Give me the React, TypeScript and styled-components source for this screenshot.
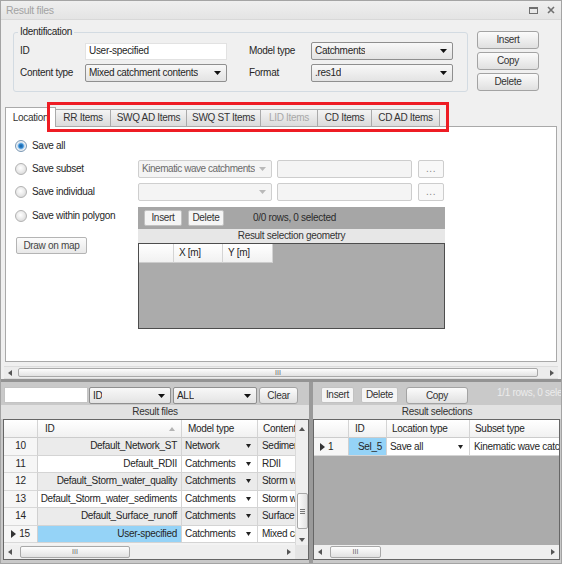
import React from "react";
import styled, { createGlobalStyle, css } from "styled-components";

const GlobalStyle = createGlobalStyle`
  html, body { margin: 0; padding: 0; background: #ffffff; }
  body {
    font-family: "Liberation Sans", Arial, sans-serif;
    font-size: 10px;
    color: #262626;
  }
  *, *::before, *::after { box-sizing: border-box; }
`;

/* ---------- window frame ---------- */

const Window = styled.div`
  width: 562px;
  height: 564px;
  border: 1px solid #a4a4a4;
  background: #f0f0f0;
  display: flex;
  flex-direction: column;
  overflow: hidden;
  letter-spacing: -0.3px;
  line-height: 12px;
`;

const TitleBar = styled.div`
  height: 19px;
  flex: none;
  display: flex;
  align-items: center;
  justify-content: space-between;
  padding: 0 6px 0 5px;
  background: linear-gradient(#efefef, #e4e4e4);
  border-bottom: 1px solid #d8d8d8;
  color: #a3a3a3;
  font-size: 10.5px;
`;

const TitleButtons = styled.div`
  display: flex;
  align-items: center;
  gap: 9px;
`;

/* ---------- identification header ---------- */

const HeaderRow = styled.div`
  flex: none;
  display: flex;
  align-items: flex-start;
  padding: 6px 0 0 12px;
`;

const GroupBox = styled.fieldset`
  margin: 0;
  min-width: 0;
  width: 455px;
  padding: 4px 14px 9px 6px;
  border: 1px solid #d3dbe2;
  border-radius: 3px;
`;

const GroupTitle = styled.legend`
  padding: 0 2px;
  margin-left: -2px;
  line-height: 12px;
`;

const FieldGrid = styled.div`
  display: grid;
  grid-template-columns: 65px 142px 22px 62px 142px;
  grid-template-rows: 18px 18px;
  row-gap: 4px;
  align-items: center;
`;

const FieldLabel = styled.span<{ $col: number }>`
  grid-column: ${(p) => p.$col};
  white-space: nowrap;
`;

const TextBox = styled.div`
  grid-column: 2;
  height: 17px;
  display: flex;
  align-items: center;
  padding: 0 3px;
  background: #ffffff;
  border: 1px solid #e2e2e2;
  white-space: nowrap;
  overflow: hidden;
`;

const Combo = styled.div<{ $disabled?: boolean; $w?: number; $h?: number; $col?: number }>`
  ${(p) => (p.$col ? `grid-column: ${p.$col};` : "")}
  width: ${(p) => (p.$w ? `${p.$w}px` : "auto")};
  height: ${(p) => p.$h ?? 18}px;
  flex: none;
  display: flex;
  align-items: center;
  justify-content: space-between;
  gap: 2px;
  padding: 0 5px 0 3px;
  border: 1px solid ${(p) => (p.$disabled ? "#cfcfcf" : "#8f8f8f")};
  border-radius: 2px;
  background: ${(p) => (p.$disabled ? "#f4f4f4" : "linear-gradient(#f8f8f8, #e3e3e3)")};
  color: ${(p) => (p.$disabled ? "#6b6b6b" : "#262626")};
  white-space: nowrap;
  overflow: hidden;
`;

const ComboText = styled.span<{ $tight?: boolean }>`
  overflow: hidden;
  white-space: nowrap;
  ${(p) => (p.$tight ? "letter-spacing: -0.45px;" : "")}
`;

const ButtonColumn = styled.div`
  display: flex;
  flex-direction: column;
  gap: 3px;
  margin: 5px 0 0 9px;
`;

const PushButton = styled.div<{ $w?: number; $h?: number; $ml?: number }>`
  width: ${(p) => p.$w ?? 62}px;
  height: ${(p) => p.$h ?? 18}px;
  margin-left: ${(p) => p.$ml ?? 0}px;
  flex: none;
  display: flex;
  align-items: center;
  justify-content: center;
  border: 1px solid #a3a3a3;
  border-radius: 3px;
  background: linear-gradient(#fbfbfb, #e0e0e0);
  color: #333333;
  white-space: nowrap;
`;

/* ---------- tabs ---------- */

const TabStrip = styled.div`
  position: relative;
  flex: none;
  display: flex;
  align-items: flex-end;
  height: 19px;
  margin: 15px 4px 0;
`;

const Tab = styled.div<{ $w: number; $active?: boolean; $disabled?: boolean }>`
  width: ${(p) => p.$w}px;
  height: 17px;
  margin-left: -1px;
  display: flex;
  align-items: center;
  justify-content: center;
  border: 1px solid #aaaaaa;
  border-bottom: none;
  background: linear-gradient(#f4f4f4, #dbdbdb);
  color: ${(p) => (p.$disabled ? "#a8a8a8" : "#333333")};
  white-space: nowrap;
  ${(p) =>
    p.$active &&
    css`
      height: 20px;
      margin: 0 0 -1px 0;
      background: #ffffff;
      position: relative;
      z-index: 1;
    `}
`;

const TabHighlight = styled.div`
  position: absolute;
  left: 42px;
  top: -5px;
  width: 402px;
  height: 30px;
  border: 3px solid #ee1c24;
  z-index: 2;
  pointer-events: none;
`;

const TabPane = styled.div`
  flex: none;
  height: 236px;
  margin: 0 4px;
  border: 1px solid #a9a9a9;
  background: #ffffff;
  display: grid;
  grid-template-columns: 132px 307px;
  grid-template-rows: 18px 18px 18px auto;
  row-gap: 5px;
  align-content: start;
  padding-top: 10px;
`;

const RadioOption = styled.div`
  grid-column: 1;
  display: flex;
  align-items: center;
  gap: 5px;
  height: 18px;
  padding-left: 9px;
  white-space: nowrap;
`;

const RadioDot = styled.span<{ $checked?: boolean }>`
  width: 12px;
  height: 12px;
  flex: none;
  border-radius: 50%;
  border: 1px solid ${(p) => (p.$checked ? "#7b98b4" : "#b2b2b2")};
  background: ${(p) =>
    p.$checked
      ? "radial-gradient(circle, #165a99 0, #2f8ad6 2.2px, #b8d6ef 3.3px, #eef1f4 4.3px, #d6dade 100%)"
      : "radial-gradient(circle at 45% 40%, #ffffff 0, #eeeeee 40%, #d0d0d0 100%)"};
`;

const PolygonCell = styled.div`
  grid-column: 1;
  margin-top: 1px;
  display: flex;
  flex-direction: column;
  align-items: flex-start;
`;

const DrawButton = styled.div`
  width: 71px;
  height: 17px;
  margin: 12px 0 0 10px;
  display: flex;
  align-items: center;
  justify-content: center;
  border: 1px solid #b4b4b4;
  border-radius: 2px;
  background: linear-gradient(#fcfcfc, #e8e8e8);
  color: #444444;
  white-space: nowrap;
`;

const ChooserRow = styled.div`
  grid-column: 2;
  display: flex;
  align-items: center;
`;

const DisabledField = styled.div`
  width: 135px;
  height: 18px;
  margin-left: 5px;
  border: 1px solid #cdcdcd;
  border-radius: 2px;
  background: #f4f4f4;
`;

const EllipsisButton = styled.div`
  width: 26px;
  height: 18px;
  margin-left: 6px;
  display: flex;
  align-items: center;
  justify-content: center;
  border: 1px solid #cdcdcd;
  border-radius: 2px;
  background: #f8f8f8;
  color: #888888;
  letter-spacing: 0.5px;
`;

const GeoPanel = styled.div`
  grid-column: 2;
  margin-top: 1px;
  height: 122px;
  display: flex;
  flex-direction: column;
`;

const GeoToolbar = styled.div`
  height: 22px;
  flex: none;
  display: flex;
  align-items: center;
  padding-left: 6px;
  background: #a6a6a6;
`;

const SmallButton = styled.div<{ $w: number; $ml?: number }>`
  width: ${(p) => p.$w}px;
  height: 16px;
  margin-left: ${(p) => p.$ml ?? 0}px;
  flex: none;
  display: flex;
  align-items: center;
  justify-content: center;
  border: 1px solid #c2c2c2;
  border-radius: 2px;
  background: #f5f5f5;
  color: #333333;
`;

const StatusText = styled.span<{ $light?: boolean; $ml: number }>`
  margin-left: ${(p) => p.$ml}px;
  color: ${(p) => (p.$light ? "#ececec" : "#2b2b2b")};
  white-space: nowrap;
`;

const Caption = styled.div<{ $tone?: string }>`
  height: 14px;
  flex: none;
  display: flex;
  align-items: center;
  justify-content: center;
  background: ${(p) => p.$tone ?? "#e7e7e7"};
  color: #333333;
  white-space: nowrap;
`;

const GeoGrid = styled.div`
  flex: 1;
  border: 1px solid #4d4d4d;
  background: #ababab;
`;

/* ---------- shared grid parts ---------- */

const GridRow = styled.div<{ $cols: string; $h: number }>`
  display: grid;
  grid-template-columns: ${(p) => p.$cols};
  height: ${(p) => p.$h}px;
`;

const HeadCell = styled.div<{ $pl?: number }>`
  display: flex;
  align-items: center;
  justify-content: space-between;
  padding: 0 6px 0 ${(p) => p.$pl ?? 6}px;
  background: linear-gradient(#ffffff, #f1f1f1);
  border-right: 1px solid #d4d4d4;
  border-bottom: 1px solid #cccccc;
  white-space: nowrap;
  overflow: hidden;
`;

const RowHead = styled.div<{ $align?: "center" | "left" }>`
  display: flex;
  align-items: center;
  justify-content: ${(p) => (p.$align === "left" ? "flex-start" : "center")};
  gap: 3px;
  padding-left: ${(p) => (p.$align === "left" ? 6 : 0)}px;
  background: #f6f6f6;
  border-right: 1px solid #d0d0d0;
  border-bottom: 1px solid #d8d8d8;
`;

const RowMarker = styled.svg`
  flex: none;
`;

type Tone = "plain" | "shade" | "selected";

const DataCell = styled.div<{ $align?: "left" | "right"; $tone?: Tone; $pl?: number }>`
  display: flex;
  align-items: center;
  justify-content: ${(p) => (p.$align === "right" ? "flex-end" : "space-between")};
  padding: 0 ${(p) => (p.$align === "right" ? 4 : 6)}px 0 ${(p) => p.$pl ?? 4}px;
  background: ${(p) =>
    p.$tone === "selected" ? "#95d3f7" : p.$tone === "shade" ? "#ebebeb" : "#ffffff"};
  border-right: 1px solid #d4d4d4;
  border-bottom: 1px solid #d4d4d4;
  white-space: nowrap;
  overflow: hidden;
`;

/* ---------- scrollbars ---------- */

const MainScroll = styled.div`
  flex: none;
  height: 13px;
  margin: 4px 3px 0;
  display: flex;
  background: #ececec;
  border-top: 1px solid #dddddd;
  border-bottom: 1px solid #dddddd;
`;

const GridHScroll = styled.div`
  height: 14px;
  flex: 1;
  display: flex;
  background: #efefef;
`;

const ScrollArrow = styled.div<{ $w?: number; $h?: number }>`
  width: ${(p) => (p.$w ? `${p.$w}px` : "auto")};
  height: ${(p) => (p.$h ? `${p.$h}px` : "auto")};
  flex: none;
  display: flex;
  align-items: center;
  justify-content: center;
`;

const ScrollTrack = styled.div`
  flex: 1;
  display: flex;
  align-items: stretch;
  padding: 1px 0;
`;

const ScrollThumb = styled.div<{ $offset: number; $size: number }>`
  margin-left: ${(p) => p.$offset}px;
  width: ${(p) => p.$size}px;
  flex: none;
  display: flex;
  align-items: center;
  justify-content: center;
  border: 1px solid #a8a8a8;
  border-radius: 2px;
  background: linear-gradient(#fdfdfd, #e2e2e2);
  color: #5e5e5e;
  font-size: 7px;
  letter-spacing: 0;
`;

const VScroll = styled.div`
  width: 13px;
  flex: none;
  display: flex;
  flex-direction: column;
  background: #efefef;
  border-left: 1px solid #dadada;
`;

const VTrack = styled.div`
  flex: 1;
  display: flex;
  flex-direction: column;
  justify-content: flex-end;
  align-items: center;
  padding-bottom: 5px;
`;

const VThumb = styled.div`
  width: 11px;
  height: 36px;
  display: flex;
  align-items: center;
  justify-content: center;
  border: 1px solid #a8a8a8;
  border-radius: 2px;
  background: linear-gradient(90deg, #fdfdfd, #e2e2e2);
`;

const Corner = styled.div`
  width: 13px;
  flex: none;
  background: #e4e4e4;
`;

/* ---------- bottom panels ---------- */

const BottomArea = styled.div`
  flex: 1;
  min-height: 0;
  display: flex;
  border-top: 3px solid #939393;
  background: #c9c9c9;
`;

const Panel = styled.div<{ $w?: number }>`
  ${(p) => (p.$w ? `width: ${p.$w}px; flex: none;` : "flex: 1; min-width: 0;")}
  display: flex;
  flex-direction: column;
  overflow: hidden;
`;

const PanelToolbar = styled.div<{ $pl: number }>`
  height: 23px;
  flex: none;
  display: flex;
  align-items: flex-start;
  padding: 5px 0 0 ${(p) => p.$pl}px;
  overflow: hidden;
`;

const FilterBox = styled.div`
  width: 84px;
  height: 16px;
  flex: none;
  background: #ffffff;
  border: 1px solid #c4c4c4;
`;

const Gap = styled.div<{ $w: number }>`
  width: ${(p) => p.$w}px;
  flex: none;
`;

const Splitter = styled.div`
  width: 4px;
  flex: none;
  background: #9a9a9a;
`;

const GridFrame = styled.div<{ $empty?: string; $m: string }>`
  flex: 1;
  min-height: 0;
  margin: ${(p) => p.$m};
  display: flex;
  flex-direction: column;
  border: 1px solid #666666;
  background: ${(p) => p.$empty ?? "#f3f3f3"};
  overflow: hidden;
`;

const GridMain = styled.div`
  flex: 1;
  min-height: 0;
  display: flex;
`;

const GridBody = styled.div`
  flex: 1;
  min-width: 0;
  overflow: hidden;
`;

const GridFoot = styled.div`
  flex: none;
  display: flex;
`;

const Filler = styled.div`
  flex: 1;
`;

/* ---------- small drawings ---------- */

const DownArrow = ({ color = "#111111", w = 7 }: { color?: string; w?: number }) => (
  <svg width={w} height={4} viewBox={`0 0 ${w} 4`} style={{ flex: "none" }}>
    <polygon points={`0,0 ${w},0 ${w / 2},4`} fill={color} />
  </svg>
);

const Tri = ({ dir, color = "#444444" }: { dir: "left" | "right" | "up" | "down"; color?: string }) => {
  const pts = {
    left: "4,0 4,6 0,3",
    right: "0,0 0,6 4,3",
    up: "0,4 6,4 3,0",
    down: "0,0 6,0 3,4",
  }[dir];
  const horiz = dir === "left" || dir === "right";
  return (
    <svg width={horiz ? 4 : 6} height={horiz ? 6 : 4} viewBox={horiz ? "0 0 4 6" : "0 0 6 4"}>
      <polygon points={pts} fill={color} />
    </svg>
  );
};

const Marker = () => (
  <RowMarker width="5" height="8" viewBox="0 0 5 8">
    <polygon points="0,0 5,4 0,8" fill="#333333" />
  </RowMarker>
);

const HScrollBar = ({ offset, size }: { offset: number; size: number }) => (
  <>
    <ScrollArrow $w={12}>
      <Tri dir="left" color="#555555" />
    </ScrollArrow>
    <ScrollTrack>
      <ScrollThumb $offset={offset} $size={size}>III</ScrollThumb>
    </ScrollTrack>
    <ScrollArrow $w={12}>
      <Tri dir="right" color="#555555" />
    </ScrollArrow>
  </>
);

/* ---------- data ---------- */

type ResultFile = { no: number; id: string; model: string; content: string; current?: boolean };

const resultFiles: ResultFile[] = [
  { no: 10, id: "Default_Network_ST", model: "Network", content: "Sediment transport" },
  { no: 11, id: "Default_RDII", model: "Catchments", content: "RDII" },
  { no: 12, id: "Default_Storm_water_quality", model: "Catchments", content: "Storm water quality" },
  { no: 13, id: "Default_Storm_water_sediments", model: "Catchments", content: "Storm water sediments" },
  { no: 14, id: "Default_Surface_runoff", model: "Catchments", content: "Surface runoff" },
  { no: 15, id: "User-specified", model: "Catchments", content: "Mixed catchment contents", current: true },
];

const tabs = [
  { label: "Location", w: 51, active: true },
  { label: "RR Items", w: 56 },
  { label: "SWQ AD Items", w: 77 },
  { label: "SWQ ST Items", w: 75 },
  { label: "LID Items", w: 58, disabled: true },
  { label: "CD Items", w: 55 },
  { label: "CD AD Items", w: 69 },
];

const LEFT_COLS = "34px 144px 76px 90px";
const RIGHT_COLS = "35px 38px 83px 140px";

export default function App() {
  return (
    <>
      <GlobalStyle />
      <Window>
        <TitleBar>
          <span>Result files</span>
          <TitleButtons>
            <svg width="9" height="7" viewBox="0 0 9 7">
              <rect x="0.5" y="0.5" width="8" height="6" fill="none" stroke="#707070" />
              <rect x="0" y="0" width="9" height="2" fill="#707070" />
            </svg>
            <svg width="8" height="8" viewBox="0 0 8 8">
              <path d="M1 1L7 7M7 1L1 7" stroke="#707070" strokeWidth="1.6" />
            </svg>
          </TitleButtons>
        </TitleBar>

        <HeaderRow>
          <GroupBox>
            <GroupTitle>Identification</GroupTitle>
            <FieldGrid>
              <FieldLabel $col={1}>ID</FieldLabel>
              <TextBox>User-specified</TextBox>
              <FieldLabel $col={4}>Model type</FieldLabel>
              <Combo $col={5}>
                <ComboText>Catchments</ComboText>
                <DownArrow />
              </Combo>
              <FieldLabel $col={1}>Content type</FieldLabel>
              <Combo $col={2}>
                <ComboText>Mixed catchment contents</ComboText>
                <DownArrow />
              </Combo>
              <FieldLabel $col={4}>Format</FieldLabel>
              <Combo $col={5}>
                <ComboText>.res1d</ComboText>
                <DownArrow />
              </Combo>
            </FieldGrid>
          </GroupBox>
          <ButtonColumn>
            <PushButton>Insert</PushButton>
            <PushButton>Copy</PushButton>
            <PushButton>Delete</PushButton>
          </ButtonColumn>
        </HeaderRow>

        <TabStrip>
          {tabs.map((t) => (
            <Tab key={t.label} $w={t.w} $active={t.active} $disabled={t.disabled}>
              {t.label}
            </Tab>
          ))}
          <TabHighlight />
        </TabStrip>

        <TabPane>
          <RadioOption>
            <RadioDot $checked />
            Save all
          </RadioOption>
          <ChooserRow style={{ gridRow: 1 }} />

          <RadioOption>
            <RadioDot />
            Save subset
          </RadioOption>
          <ChooserRow>
            <Combo $disabled $w={134}>
              <ComboText $tight>Kinematic wave catchments</ComboText>
              <DownArrow color="#b9b9b9" />
            </Combo>
            <DisabledField />
            <EllipsisButton>...</EllipsisButton>
          </ChooserRow>

          <RadioOption>
            <RadioDot />
            Save individual
          </RadioOption>
          <ChooserRow>
            <Combo $disabled $w={134}>
              <ComboText />
              <DownArrow color="#b9b9b9" />
            </Combo>
            <DisabledField />
            <EllipsisButton>...</EllipsisButton>
          </ChooserRow>

          <PolygonCell>
            <RadioOption>
              <RadioDot />
              Save within polygon
            </RadioOption>
            <DrawButton>Draw on map</DrawButton>
          </PolygonCell>
          <GeoPanel>
            <GeoToolbar>
              <SmallButton $w={38}>Insert</SmallButton>
              <SmallButton $w={36} $ml={6}>
                Delete
              </SmallButton>
              <StatusText $ml={29}>0/0 rows, 0 selected</StatusText>
            </GeoToolbar>
            <Caption>Result selection geometry</Caption>
            <GeoGrid>
              <GridRow $cols="35px 49px 50px" $h={19}>
                <HeadCell />
                <HeadCell $pl={5}>X [m]</HeadCell>
                <HeadCell $pl={5}>Y [m]</HeadCell>
              </GridRow>
            </GeoGrid>
          </GeoPanel>
        </TabPane>

        <MainScroll>
          <HScrollBar offset={2} size={520} />
        </MainScroll>

        <BottomArea>
          <Panel $w={308}>
            <PanelToolbar $pl={3}>
              <FilterBox />
              <Gap $w={1} />
              <Combo $w={82} $h={17}>
                <ComboText>ID</ComboText>
                <DownArrow />
              </Combo>
              <Gap $w={2} />
              <Combo $w={84} $h={17}>
                <ComboText>ALL</ComboText>
                <DownArrow />
              </Combo>
              <PushButton $w={39} $h={17} $ml={2}>
                Clear
              </PushButton>
            </PanelToolbar>
            <Caption $tone="#e2e2e2">Result files</Caption>
            <GridFrame $m="0 0 3px 2px">
              <GridMain>
                <GridBody>
                  <GridRow $cols={LEFT_COLS} $h={18}>
                    <HeadCell />
                    <HeadCell $pl={7}>
                      <span>ID</span>
                      <Tri dir="up" color="#b4b4b4" />
                    </HeadCell>
                    <HeadCell>
                      <span>Model type</span>
                    </HeadCell>
                    <HeadCell $pl={5}>
                      <span>Content type</span>
                    </HeadCell>
                  </GridRow>
                  {resultFiles.map((f, i) => {
                    const tone: Tone = i % 2 === 0 ? "shade" : "plain";
                    return (
                      <GridRow key={f.no} $cols={LEFT_COLS} $h={17.5}>
                        <RowHead>
                          {f.current && <Marker />}
                          <span>{f.no}</span>
                        </RowHead>
                        <DataCell $align="right" $tone={f.current ? "selected" : tone}>
                          {f.id}
                        </DataCell>
                        <DataCell $tone={f.current ? "plain" : tone} $pl={3}>
                          <span>{f.model}</span>
                          <DownArrow w={5} color="#222222" />
                        </DataCell>
                        <DataCell $tone={f.current ? "plain" : tone}>{f.content}</DataCell>
                      </GridRow>
                    );
                  })}
                </GridBody>
                <VScroll>
                  <ScrollArrow $h={18}>
                    <Tri dir="up" color="#555555" />
                  </ScrollArrow>
                  <VTrack>
                    <VThumb>
                      <svg width="5" height="5" viewBox="0 0 5 5">
                        <path d="M0 0.5H5M0 2.5H5M0 4.5H5" stroke="#777777" strokeWidth="1" />
                      </svg>
                    </VThumb>
                  </VTrack>
                  <ScrollArrow $h={11}>
                    <Tri dir="down" color="#555555" />
                  </ScrollArrow>
                </VScroll>
              </GridMain>
              <GridFoot>
                <GridHScroll>
                  <HScrollBar offset={4} size={110} />
                </GridHScroll>
                <Corner />
              </GridFoot>
            </GridFrame>
          </Panel>

          <Splitter />

          <Panel>
            <PanelToolbar $pl={8}>
              <SmallButton $w={33}>Insert</SmallButton>
              <SmallButton $w={37} $ml={7}>
                Delete
              </SmallButton>
              <PushButton $w={62} $h={17} $ml={8}>
                Copy
              </PushButton>
              <StatusText $light $ml={29}>
                1/1 rows, 0 selected
              </StatusText>
            </PanelToolbar>
            <Caption $tone="#e2e2e2">Result selections</Caption>
            <GridFrame $m="0 1px 3px 0" $empty="#ababab">
              <GridRow $cols={RIGHT_COLS} $h={18}>
                <HeadCell />
                <HeadCell>ID</HeadCell>
                <HeadCell $pl={5}>Location type</HeadCell>
                <HeadCell $pl={5}>Subset type</HeadCell>
              </GridRow>
              <GridRow $cols={RIGHT_COLS} $h={18}>
                <RowHead $align="left">
                  <Marker />
                  <span>1</span>
                </RowHead>
                <DataCell $align="right" $tone="selected">
                  Sel_5
                </DataCell>
                <DataCell $pl={3}>
                  <span>Save all</span>
                  <DownArrow w={5} color="#222222" />
                </DataCell>
                <DataCell>Kinematic wave catchments</DataCell>
              </GridRow>
              <Filler />
              <GridFoot>
                <GridHScroll>
                  <HScrollBar offset={4} size={51} />
                </GridHScroll>
              </GridFoot>
            </GridFrame>
          </Panel>
        </BottomArea>
      </Window>
    </>
  );
}
